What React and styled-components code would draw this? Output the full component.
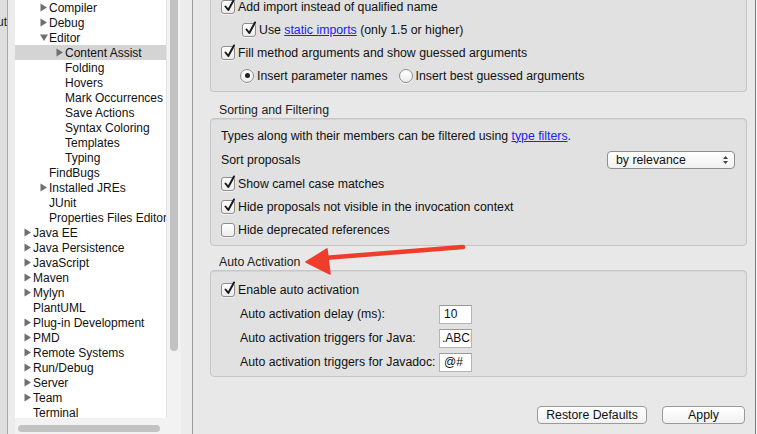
import React from 'react';
import styled, { createGlobalStyle } from 'styled-components';

const GlobalStyle = createGlobalStyle`
  * { box-sizing: border-box; }
  html, body { margin: 0; padding: 0; overflow: hidden; }
  body {
    font-family: "Liberation Sans", Arial, sans-serif;
    font-size: 12px;
    color: #111;
    background: #e8e8e8;
  }
`;

const Window = styled.div`
  position: relative;
  display: flex;
  width: 757px;
  height: 434px;
  overflow: hidden;
`;

const BehindStrip = styled.div`
  width: 8px;
  background: #dedede;
  border-right: 1px solid #a9a9a9;
  overflow: hidden;
  direction: rtl;
  padding-top: 15px;
  font-size: 12px;
  white-space: nowrap;
  color: #222;
`;

const LeftPane = styled.div`
  width: 185px;
  background: #ececec;
  padding-left: 7px;
  border-right: 1px solid #9a9a9a;
`;

const TreeFrame = styled.div`
  width: 166px;
  height: 434px;
  display: flex;
  flex-direction: column;
`;

const TreeArea = styled.div`
  flex: 1;
  display: flex;
  min-height: 0;
`;

const TreeList = styled.div`
  width: 151px;
  background: #fff;
  overflow: hidden;
`;

const VScroll = styled.div`
  width: 15px;
  background: #f2f2f2;
  border-left: 1px solid #e4e4e4;
  padding: 0 3px;
`;

const VThumb = styled.div`
  height: 351px;
  background: #c2c2c2;
  border-radius: 0 0 4px 4px;
`;

const HScroll = styled.div`
  height: 16px;
  background: #f2f2f2;
  padding: 7px 6px 2px 3px;
`;

const HThumb = styled.div`
  width: 142px;
  height: 7px;
  background: #c2c2c2;
  border-radius: 4px;
`;

const TreeRow = styled.div`
  height: 15px;
  display: flex;
  align-items: center;
  padding-left: ${(p) => 9 + p.$level * 16}px;
  background: ${(p) => (p.$selected ? '#d4d4d4' : 'transparent')};
  white-space: nowrap;
  font-size: 12px;
  color: #111;
`;

const Twisty = styled.span`
  width: 9px;
  height: 15px;
  display: inline-flex;
  align-items: center;
  flex: none;
`;

const Arrow = ({ open }) => (
  <svg width="8" height="9" viewBox="0 0 8 9">
    {open ? (
      <path d="M0 1.5 L8 1.5 L4 8 Z" fill="#6f6f6f" />
    ) : (
      <path d="M0.5 0.5 L7 4.5 L0.5 8.5 Z" fill="#6f6f6f" />
    )}
  </svg>
);

const RightPane = styled.div`
  flex: 1;
  display: flex;
  flex-direction: column;
  background: #e8e8e8;
  padding: 0 8px 10px 17px;
  font-size: 12.3px;
`;

const Group = styled.div`
  background: #e1e1e1;
  border: 1px solid #c6c6c6;
  border-radius: 4px;
  box-shadow: inset 0 1px 0 #d4d4d4;
  padding: ${(p) => p.$pad || '0'};
  ${(p) =>
    p.$clipped &&
    `
    margin-top: -5px;
    border-top: none;
    border-radius: 0 0 4px 4px;
  `}
`;

const GroupTitle = styled.div`
  height: 17px;
  margin-top: ${(p) => p.$top}px;
  padding-left: 9px;
  display: flex;
  align-items: center;
  color: #222;
`;

const Row = styled.div`
  height: ${(p) => p.$h || 23}px;
  display: flex;
  align-items: center;
  padding-left: ${(p) => p.$indent || 10}px;
  padding-right: 11px;
  white-space: nowrap;
`;

const Link = styled.span`
  color: #1a22f5;
  text-decoration: underline;
`;

const Box = styled.span`
  width: 14px;
  height: 14px;
  flex: none;
  border: 1px solid #8d8d8d;
  border-radius: ${(p) => (p.$round ? '50%' : '3px')};
  background: linear-gradient(#ffffff, #ececec);
  box-shadow: 0 1px 0 rgba(255, 255, 255, 0.6);
  margin-right: 3px;
  position: relative;
  display: inline-flex;
  align-items: center;
  justify-content: center;
`;

const Dot = styled.span`
  width: 5px;
  height: 5px;
  border-radius: 50%;
  background: #222;
`;

const Check = styled.svg`
  position: absolute;
  left: 1px;
  top: -3px;
`;

const Checkbox = ({ checked }) => (
  <Box>
    {checked && (
      <Check width="13" height="15" viewBox="0 0 13 15">
        <path d="M2.5 8.5 L5.3 12 L11 1.5" stroke="#1b1b1b" strokeWidth="2" fill="none" strokeLinecap="round" strokeLinejoin="round" />
      </Check>
    )}
  </Box>
);

const Radio = ({ checked }) => <Box $round>{checked && <Dot />}</Box>;

const Gap = styled.span`
  width: ${(p) => p.$w}px;
  flex: none;
`;

const Select = styled.div`
  margin-left: auto;
  width: 128px;
  height: 18px;
  border: 1px solid #8e8e8e;
  border-radius: 4px;
  background: linear-gradient(#ffffff, #f0f0f0);
  display: flex;
  align-items: center;
  justify-content: space-between;
  padding: 0 6px 0 8px;
  color: #111;
`;

const Updown = () => (
  <svg width="5" height="10" viewBox="0 0 5 10">
    <path d="M0 4 L2.5 1 L5 4 Z M0 6 L2.5 9 L5 6 Z" fill="#444" />
  </svg>
);

const FieldRow = styled.div`
  height: 24px;
  display: grid;
  grid-template-columns: 199px 33px;
  align-items: center;
  padding-left: 29px;
  white-space: nowrap;
`;

const Field = styled.div`
  height: 19px;
  background: #fff;
  border: 1px solid #b5b5b5;
  border-top-color: #9a9a9a;
  display: flex;
  align-items: center;
  padding-left: ${(p) => p.$pad ?? 4}px;
  overflow: hidden;
  white-space: nowrap;
  font-size: 12px;
`;

const ButtonBar = styled.div`
  margin-top: auto;
  display: flex;
  justify-content: flex-end;
  gap: 15px;
  padding-right: 2px;
`;

const Button = styled.button`
  width: ${(p) => p.$w}px;
  height: 18px;
  font-family: inherit;
  font-size: 12.3px;
  color: #111;
  border: 1px solid #9a9a9a;
  border-radius: 4px;
  background: linear-gradient(#ffffff, #f1f1f1);
  padding: 0;
`;

const EdgeStrip = styled.div`
  width: 2px;
  background: #f4f4f4;
  border-left: 1px solid #7a7a7a;
`;

const Annotation = styled.svg`
  position: absolute;
  left: 0;
  top: 0;
  pointer-events: none;
`;

const tree = [
  { t: 'Compiler', l: 1, a: 'closed' },
  { t: 'Debug', l: 1, a: 'closed' },
  { t: 'Editor', l: 1, a: 'open' },
  { t: 'Content Assist', l: 2, a: 'closed', sel: true },
  { t: 'Folding', l: 2 },
  { t: 'Hovers', l: 2 },
  { t: 'Mark Occurrences', l: 2 },
  { t: 'Save Actions', l: 2 },
  { t: 'Syntax Coloring', l: 2 },
  { t: 'Templates', l: 2 },
  { t: 'Typing', l: 2 },
  { t: 'FindBugs', l: 1 },
  { t: 'Installed JREs', l: 1, a: 'closed' },
  { t: 'JUnit', l: 1 },
  { t: 'Properties Files Editor', l: 1 },
  { t: 'Java EE', l: 0, a: 'closed' },
  { t: 'Java Persistence', l: 0, a: 'closed' },
  { t: 'JavaScript', l: 0, a: 'closed' },
  { t: 'Maven', l: 0, a: 'closed' },
  { t: 'Mylyn', l: 0, a: 'closed' },
  { t: 'PlantUML', l: 0 },
  { t: 'Plug-in Development', l: 0, a: 'closed' },
  { t: 'PMD', l: 0, a: 'closed' },
  { t: 'Remote Systems', l: 0, a: 'closed' },
  { t: 'Run/Debug', l: 0, a: 'closed' },
  { t: 'Server', l: 0, a: 'closed' },
  { t: 'Team', l: 0, a: 'closed' },
  { t: 'Terminal', l: 0 },
];

const App = () => {
  return (
    <>
      <GlobalStyle />
      <Window>
        <BehindStrip>Out</BehindStrip>
        <LeftPane>
          <TreeFrame>
            <TreeArea>
              <TreeList>
                {tree.map((n) => (
                  <TreeRow key={n.t} $level={n.l} $selected={n.sel}>
                    <Twisty>{n.a && <Arrow open={n.a === 'open'} />}</Twisty>
                    {n.t}
                  </TreeRow>
                ))}
              </TreeList>
              <VScroll>
                <VThumb />
              </VScroll>
            </TreeArea>
            <HScroll>
              <HThumb />
            </HScroll>
          </TreeFrame>
        </LeftPane>

        <RightPane>
          <Group $clipped $pad="0 0 4px">
            <Row>
              <Checkbox checked />
              Add import instead of qualified name
            </Row>
            <Row $indent={31}>
              <Checkbox checked />
              Use&nbsp;<Link>static imports</Link>&nbsp;(only 1.5 or higher)
            </Row>
            <Row>
              <Checkbox checked />
              Fill method arguments and show guessed arguments
            </Row>
            <Row $indent={29}>
              <Radio checked />
              Insert parameter names
              <Gap $w={11} />
              <Radio />
              Insert best guessed arguments
            </Row>
          </Group>

          <GroupTitle $top={9}>Sorting and Filtering</GroupTitle>
          <Group $pad="5px 0 4px">
            <Row>
              Types along with their members can be filtered using&nbsp;<Link>type filters</Link>.
            </Row>
            <Row $h={25}>
              Sort proposals
              <Select>
                by relevance
                <Updown />
              </Select>
            </Row>
            <Row>
              <Checkbox checked />
              Show camel case matches
            </Row>
            <Row>
              <Checkbox checked />
              Hide proposals not visible in the invocation context
            </Row>
            <Row>
              <Checkbox />
              Hide deprecated references
            </Row>
          </Group>

          <GroupTitle $top={7}>Auto Activation</GroupTitle>
          <Group $pad="7px 0 2px">
            <Row $h={24}>
              <Checkbox checked />
              Enable auto activation
            </Row>
            <FieldRow>
              Auto activation delay (ms):
              <Field>10</Field>
            </FieldRow>
            <FieldRow>
              Auto activation triggers for Java:
              <Field $pad={2}>.ABCDEFGHIJ</Field>
            </FieldRow>
            <FieldRow>
              Auto activation triggers for Javadoc:
              <Field>@#</Field>
            </FieldRow>
          </Group>

          <ButtonBar>
            <Button $w={110}>Restore Defaults</Button>
            <Button $w={83}>Apply</Button>
          </ButtonBar>
        </RightPane>
        <EdgeStrip />

        <Annotation width="757" height="434" viewBox="0 0 757 434">
          <path d="M463 247 L324 258" stroke="#ef3d2c" strokeWidth="4.5" strokeLinecap="round" />
          <path d="M306 262 L327 249 L330 274 Z" fill="#ef3d2c" stroke="#ef3d2c" strokeWidth="1.5" strokeLinejoin="round" />
        </Annotation>
      </Window>
    </>
  );
};

export default App;
